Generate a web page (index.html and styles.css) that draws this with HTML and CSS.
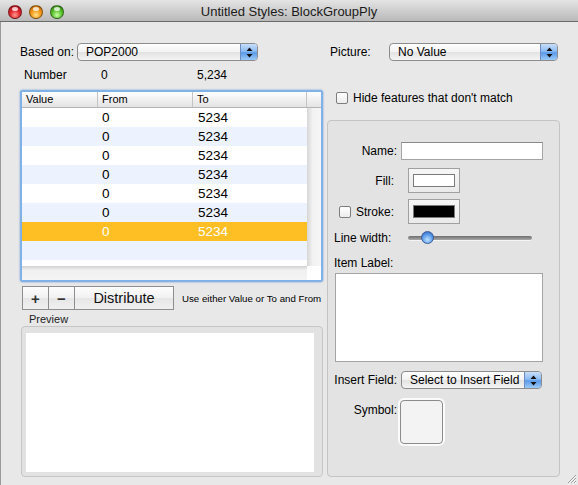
FILE: index.html
```html
<!DOCTYPE html>
<html lang="en">
<head>
    <meta charset="UTF-8">
    <title>Untitled Styles: BlockGroupPly</title>
    <link rel="stylesheet" href="styles.css">
</head>
<body>
    <div class="window">
        <div class="titlebar">
            <div class="lights">
                <span class="light red"></span>
                <span class="light yellow"></span>
                <span class="light green"></span>
            </div>
            <div class="title">Untitled Styles: BlockGroupPly</div>
        </div>

        <div class="content">
            <!-- left side: classes table -->
            <div class="left">
                <div class="field-row">
                    <span class="based-label">Based on:</span>
                    <div class="popup popup-based">
                        <span class="popup-text">POP2000</span>
                        <span class="popup-arrows">
                            <svg width="7" height="11" viewBox="0 0 7 11"><path d="M3.5 0.5 L6.5 4 L0.5 4 Z M3.5 10.5 L6.5 7 L0.5 7 Z" fill="#111"/></svg>
                        </span>
                    </div>
                </div>

                <div class="number-row">
                    <span class="num-label">Number</span>
                    <span class="num-min">0</span>
                    <span>5,234</span>
                </div>

                <div class="table-frame">
                    <div class="thead">
                        <div class="th col-value">Value</div>
                        <div class="th col-from">From</div>
                        <div class="th col-to">To</div>
                        <div class="th col-extra"></div>
                    </div>
                    <div class="tbody">
                        <div class="rows">
                            <div class="tr"><span class="td col-value"></span><span class="td col-from">0</span><span class="td col-to">5234</span></div>
                            <div class="tr alt"><span class="td col-value"></span><span class="td col-from">0</span><span class="td col-to">5234</span></div>
                            <div class="tr"><span class="td col-value"></span><span class="td col-from">0</span><span class="td col-to">5234</span></div>
                            <div class="tr alt"><span class="td col-value"></span><span class="td col-from">0</span><span class="td col-to">5234</span></div>
                            <div class="tr"><span class="td col-value"></span><span class="td col-from">0</span><span class="td col-to">5234</span></div>
                            <div class="tr alt"><span class="td col-value"></span><span class="td col-from">0</span><span class="td col-to">5234</span></div>
                            <div class="tr selected"><span class="td col-value"></span><span class="td col-from">0</span><span class="td col-to">5234</span></div>
                            <div class="tr alt"></div>
                            <div class="tr"></div>
                        </div>
                        <div class="vscroll"></div>
                    </div>
                    <div class="hscroll-row">
                        <div class="hscroll"></div>
                        <div class="corner"></div>
                    </div>
                </div>

                <div class="button-row">
                    <div class="seg">
                        <span class="seg-btn seg-small">+</span>
                        <span class="seg-btn seg-small">&minus;</span>
                        <span class="seg-btn seg-wide">Distribute</span>
                    </div>
                    <span class="hint">Use either Value or To and From</span>
                </div>

                <div class="preview-label">Preview</div>
                <div class="preview-box">
                    <div class="preview-inner"></div>
                </div>
            </div>

            <!-- right side: class details -->
            <div class="right">
                <div class="field-row">
                    <span class="picture-label">Picture:</span>
                    <div class="popup popup-picture">
                        <span class="popup-text">No Value</span>
                        <span class="popup-arrows">
                            <svg width="7" height="11" viewBox="0 0 7 11"><path d="M3.5 0.5 L6.5 4 L0.5 4 Z M3.5 10.5 L6.5 7 L0.5 7 Z" fill="#111"/></svg>
                        </span>
                    </div>
                </div>

                <div class="hide-row">
                    <span class="checkbox"></span>
                    <span>Hide features that don't match</span>
                </div>

                <div class="panel">
                    <div class="prow name-row">
                        <span class="rlabel">Name:</span>
                        <span class="text-input"></span>
                    </div>
                    <div class="prow fill-row">
                        <span class="rlabel short">Fill:</span>
                        <span class="well"><span class="swatch white"></span></span>
                    </div>
                    <div class="prow stroke-row">
                        <span class="rlabel short"><span class="checkbox"></span>Stroke:</span>
                        <span class="well"><span class="swatch black"></span></span>
                    </div>
                    <div class="prow line-row">
                        <span class="llabel">Line width:</span>
                        <span class="slider"><span class="knob"></span></span>
                    </div>
                    <div class="item-label">Item Label:</div>
                    <div class="textarea"></div>
                    <div class="prow insert-row">
                        <span class="rlabel">Insert Field:</span>
                        <div class="popup popup-insert">
                            <span class="popup-text">Select to Insert Field</span>
                            <span class="popup-arrows">
                                <svg width="7" height="11" viewBox="0 0 7 11"><path d="M3.5 0.5 L6.5 4 L0.5 4 Z M3.5 10.5 L6.5 7 L0.5 7 Z" fill="#111"/></svg>
                            </span>
                        </div>
                    </div>
                    <div class="prow symbol-row">
                        <span class="rlabel">Symbol:</span>
                        <span class="symbol-box"></span>
                    </div>
                </div>
            </div>
        </div>

        <svg class="grip" width="12" height="12" viewBox="0 0 12 12">
            <path d="M11 3 L3 11 M11 6 L6 11 M11 9 L9 11" stroke="#9a9a9a" stroke-width="1"/>
            <path d="M11 4 L4 11 M11 7 L7 11 M11 10 L10 11" stroke="#fafafa" stroke-width="1"/>
        </svg>
    </div>
</body>
</html>
```

FILE: styles.css
```css
body {
    margin: 0;
    font-family: "Liberation Sans", Arial, sans-serif;
    font-size: 12px;
    color: #000;
    background-color: #e8e8e8;
}
.window {
    position: relative;
    width: 578px;
    height: 485px;
    overflow: hidden;
    background-color: #e8e8e8;
}
.titlebar {
    position: relative;
    height: 21px;
    border-bottom: 1px solid #6a6a6a;
    background: linear-gradient(#e4e4e4, #b9b9b9);
    display: flex;
    align-items: center;
    justify-content: center;
}
.lights {
    position: absolute;
    left: 8px;
    top: 5px;
    display: flex;
    gap: 7px;
}
.light {
    position: relative;
    width: 14px;
    height: 14px;
    border-radius: 50%;
    box-sizing: border-box;
    border: 1px solid rgba(0, 0, 0, 0.4);
}
.light::after {
    content: "";
    position: absolute;
    left: 3px;
    top: 1px;
    width: 6px;
    height: 4px;
    border-radius: 50%;
    background-color: rgba(255, 255, 255, 0.75);
}
.red {
    background: radial-gradient(circle at 50% 75%, #ff9a90 0, #e3262d 45%, #98101a 100%);
}
.yellow {
    background: radial-gradient(circle at 50% 75%, #ffe28a 0, #f59a1a 45%, #b05a06 100%);
}
.green {
    background: radial-gradient(circle at 50% 75%, #c8ffa8 0, #5cc42e 45%, #2a7a10 100%);
}
.title {
    font-size: 13px;
    color: #1a1a1a;
    padding-top: 2px;
}

.content {
    display: flex;
    gap: 4px;
    padding-left: 20px;
    height: 463px;
    border-left: 1px solid #9a9a9a;
    box-sizing: border-box;
}
.left {
    width: 303px;
    padding-top: 21px;
    display: flex;
    flex-direction: column;
    margin-left: -1px;
}
.right {
    width: 233px;
    padding-top: 21px;
    display: flex;
    flex-direction: column;
}

/* popups */
.field-row {
    display: flex;
    align-items: center;
    height: 18px;
}
.based-label {
    width: 57px;
}
.picture-label {
    width: 59px;
    margin-left: 3px;
}
.popup {
    height: 18px;
    box-sizing: border-box;
    display: flex;
    border: 1px solid #8c8c8c;
    border-radius: 4px;
    background: linear-gradient(#ffffff, #f2f2f2 50%, #e2e2e2 51%, #f4f4f4);
    overflow: hidden;
}
.popup-text {
    flex: 1;
    padding-left: 8px;
    line-height: 16px;
    white-space: nowrap;
}
.popup-arrows {
    width: 16px;
    display: flex;
    align-items: center;
    justify-content: center;
    border-left: 1px solid #6c8cc0;
    background: linear-gradient(#c6defa, #8ebcf2 45%, #5a9ae8 55%, #9ccaf8);
}
.popup-based {
    width: 181px;
}
.popup-picture {
    width: 169px;
}
.popup-insert {
    width: 141px;
}

.number-row {
    display: flex;
    margin-top: 7px;
    height: 14px;
    line-height: 14px;
}
.num-label {
    width: 77px;
    padding-left: 4px;
}
.num-min {
    width: 96px;
}

/* table */
.table-frame {
    margin-top: 8px;
    width: 303px;
    height: 192px;
    box-sizing: border-box;
    border: 2px solid #80b2e8;
    border-radius: 3px;
    box-shadow: 0 0 2px rgba(70, 130, 210, 0.8);
    background-color: #fff;
    display: flex;
    flex-direction: column;
}
.thead {
    display: flex;
    height: 16px;
    box-sizing: border-box;
    border-bottom: 1px solid #b4b4b4;
    background: linear-gradient(#ffffff, #f0f0f0 50%, #e4e4e4);
}
.th {
    font-size: 11px;
    line-height: 15px;
    padding-left: 4px;
    box-sizing: border-box;
    border-right: 1px solid #c4c4c4;
}
.th:last-child {
    border-right: none;
}
.col-value {
    width: 76px;
}
.col-from {
    width: 95px;
}
.col-to {
    width: 114px;
}
.col-extra {
    width: 14px;
}
.tbody {
    display: flex;
    height: 158px;
}
.rows {
    width: 285px;
    overflow: hidden;
}
.tr {
    display: flex;
    height: 19px;
    background-color: #fff;
}
.tr.alt {
    background-color: #edf3fe;
}
.tr.selected {
    background-color: #fdbf24;
    color: #fff;
}
.td {
    font-size: 13.5px;
    line-height: 20px;
    padding-left: 4px;
    box-sizing: border-box;
}
.td.col-to {
    padding-left: 5px;
}
.vscroll {
    width: 14px;
    background: linear-gradient(90deg, #d6d6d6, #f2f2f2 40%, #f6f6f6);
}
.hscroll-row {
    display: flex;
    height: 14px;
}
.hscroll {
    width: 285px;
    background: linear-gradient(#d2d2d2, #f0f0f0 30%, #f4f4f4);
}
.corner {
    flex: 1;
    background-color: #fff;
}

/* buttons */
.button-row {
    display: flex;
    align-items: center;
    margin-top: 4px;
    height: 24px;
}
.seg {
    display: flex;
    margin-left: 2px;
    border: 1px solid #8e8e8e;
    height: 24px;
    box-sizing: border-box;
    background: linear-gradient(#fdfdfd, #f1f1f1 50%, #e6e6e6 51%, #f0f0f0);
}
.seg-btn {
    display: flex;
    align-items: center;
    justify-content: center;
    border-right: 1px solid #8e8e8e;
}
.seg-btn:last-child {
    border-right: none;
}
.seg-small {
    width: 25px;
    font-size: 15px;
    font-weight: bold;
    color: #333;
}
.seg-wide {
    width: 98px;
    font-size: 14.5px;
    color: #111;
}
.hint {
    margin-left: 8px;
    font-size: 9.7px;
    white-space: nowrap;
}
.preview-label {
    margin-top: 3px;
    height: 12px;
    line-height: 12px;
    font-size: 11px;
    padding-left: 9px;
    color: #222;
}
.preview-box {
    margin-top: 1px;
    margin-left: 1px;
    width: 302px;
    height: 151px;
    box-sizing: border-box;
    border: 1px solid #c6c6c6;
    border-radius: 4px;
    background-color: #e2e2e2;
    padding: 6px 8px 4px 4px;
}
.preview-inner {
    height: 100%;
    background-color: #fff;
}

/* right side */
.hide-row {
    display: flex;
    align-items: center;
    gap: 5px;
    margin-top: 31px;
    margin-left: 9px;
    height: 12px;
}
.checkbox {
    display: inline-block;
    width: 12px;
    height: 12px;
    box-sizing: border-box;
    border: 1px solid #7e7e7e;
    border-radius: 2px;
    background: linear-gradient(#ffffff, #ececec);
}
.panel {
    margin-top: 16px;
    height: 357px;
    box-sizing: border-box;
    border: 1px solid #c4c4c4;
    border-radius: 4px;
    background-color: #e3e3e3;
    padding: 21px 0 0 6px;
    display: flex;
    flex-direction: column;
}
.prow {
    display: flex;
    align-items: center;
}
.rlabel {
    width: 63px;
    margin-right: 4px;
    text-align: right;
    display: flex;
    align-items: center;
    justify-content: flex-end;
    gap: 5px;
}
.rlabel.short {
    width: 60px;
    margin-right: 14px;
}
.text-input {
    width: 142px;
    height: 18px;
    box-sizing: border-box;
    border: 1px solid #a4a4a4;
    border-top-color: #8a8a8a;
    background-color: #fff;
}
.fill-row {
    margin-top: 8px;
}
.stroke-row {
    margin-top: 6px;
}
.well {
    width: 52px;
    height: 25px;
    box-sizing: border-box;
    border: 1px solid #a0a0a0;
    background: linear-gradient(#f6f6f6, #eaeaea);
    padding: 5px 4px 5px 4px;
}
.swatch {
    display: block;
    height: 100%;
    box-sizing: border-box;
    border: 1px solid #7a7a7a;
}
.swatch.white {
    background-color: #fff;
}
.swatch.black {
    background-color: #000;
}
.line-row {
    margin-top: 7px;
    height: 14px;
}
.llabel {
    width: 74px;
}
.slider {
    position: relative;
    width: 124px;
    height: 4px;
    border-radius: 2px;
    background: linear-gradient(#6e6e6e, #a8a8a8);
    box-shadow: 0 1px 0 #f4f4f4;
}
.knob {
    position: absolute;
    left: 13px;
    top: -5px;
    width: 13px;
    height: 13px;
    box-sizing: border-box;
    border-radius: 50%;
    border: 1px solid #3a5a9a;
    background: radial-gradient(circle at 50% 70%, #bfe2ff 0, #5a9ae8 55%, #2a5ab4 100%);
}
.item-label {
    margin-top: 11px;
    height: 14px;
    line-height: 14px;
}
.textarea {
    margin-top: 3px;
    margin-left: 1px;
    width: 208px;
    height: 89px;
    box-sizing: border-box;
    border: 1px solid #a4a4a4;
    background-color: #fff;
}
.insert-row {
    margin-top: 9px;
    height: 18px;
}
.symbol-row {
    margin-top: 11px;
    align-items: flex-start;
}
.symbol-row .rlabel {
    margin-top: 3px;
    margin-right: 3px;
}
.symbol-box {
    width: 43px;
    height: 44px;
    box-sizing: border-box;
    border: 1px solid #8c8c8c;
    border-radius: 4px;
    background-color: #f3f3f3;
    box-shadow: 0 0 0 2px #fbfbfb;
}
.grip {
    position: absolute;
    right: 1px;
    bottom: 1px;
}
```
